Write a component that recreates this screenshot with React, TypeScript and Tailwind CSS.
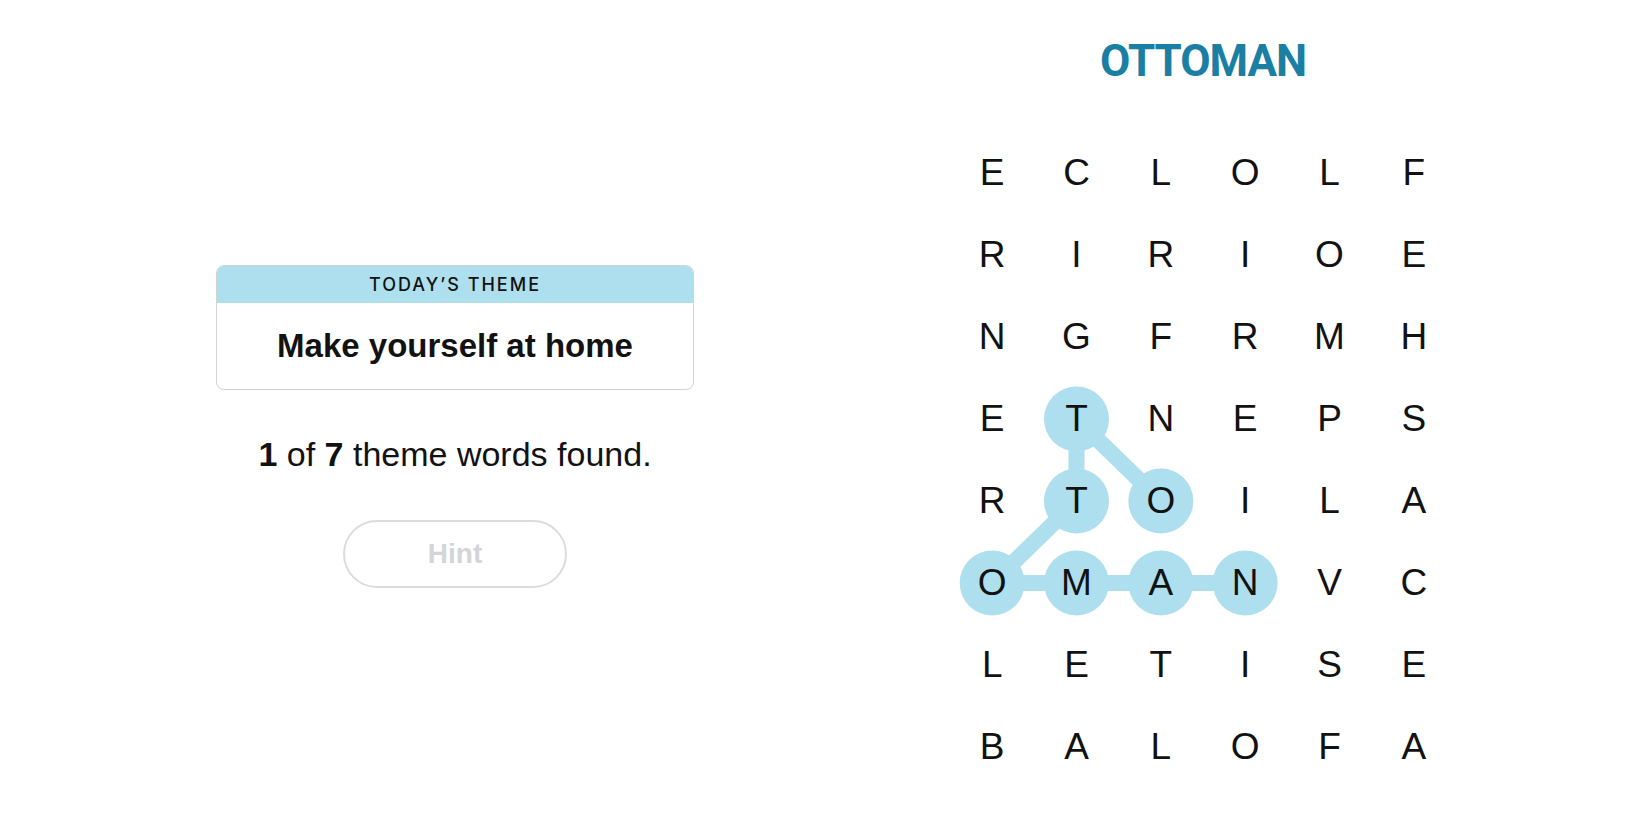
import React from 'react';

const GRID = [
  ['E', 'C', 'L', 'O', 'L', 'F'],
  ['R', 'I', 'R', 'I', 'O', 'E'],
  ['N', 'G', 'F', 'R', 'M', 'H'],
  ['E', 'T', 'N', 'E', 'P', 'S'],
  ['R', 'T', 'O', 'I', 'L', 'A'],
  ['O', 'M', 'A', 'N', 'V', 'C'],
  ['L', 'E', 'T', 'I', 'S', 'E'],
  ['B', 'A', 'L', 'O', 'F', 'A'],
];

// found path, in order: O T T O M A N
const FOUND: [number, number][] = [
  [4, 2],
  [3, 1],
  [4, 1],
  [5, 0],
  [5, 1],
  [5, 2],
  [5, 3],
];

const CELL_W = 506 / 6;
const CELL_H = 82;

const cx = (c: number) => CELL_W / 2 + CELL_W * c;
const cy = (r: number) => CELL_H / 2 + CELL_H * r;

function Board() {
  return (
    <div className="relative w-[506px]">
      <svg className="absolute inset-0" width={506} height={656} viewBox="0 0 506 656">
        {FOUND.slice(1).map(([r, c], i) => {
          const [pr, pc] = FOUND[i];
          return (
            <line
              key={i}
              x1={cx(pc)}
              y1={cy(pr)}
              x2={cx(c)}
              y2={cy(r)}
              stroke="#aedfee"
              strokeWidth={16}
            />
          );
        })}
        {FOUND.map(([r, c], i) => (
          <circle key={i} cx={cx(c)} cy={cy(r)} r={32.5} fill="#aedfee" />
        ))}
      </svg>
      <div className="relative grid grid-cols-6">
        {GRID.flat().map((ch, i) => (
          <div
            key={i}
            className="h-[82px] flex items-center justify-center text-[37px] text-[#121212] font-['Liberation_Sans',Arial,sans-serif]"
          >
            {ch}
          </div>
        ))}
      </div>
    </div>
  );
}

export default function App() {
  return (
    <main className="min-h-screen w-full bg-white flex font-['Liberation_Sans',Arial,sans-serif] text-[#121212]">
      <section className="pl-[216px] pt-[265px] w-[694px] flex flex-col items-center">
        <div className="w-[478px] border border-[#d3d3d3] rounded-lg overflow-hidden">
          <div className="h-[37px] bg-[#aedfee] flex items-center justify-center text-[18px] font-medium tracking-[2px] uppercase font-['Inter',sans-serif]">
            Today’s Theme
          </div>
          <div className="h-[86px] flex items-center justify-center text-[33px] font-bold">
            Make yourself at home
          </div>
        </div>

        <p className="mt-[44px] text-[34px] leading-[40px]">
          <span className="font-bold">1</span> of <span className="font-bold">7</span> theme words found.
        </p>

        <button className="mt-[46px] w-[224px] h-[68px] rounded-full border-2 border-[#dcdcdc] text-[28px] font-bold text-[#d3d5d9]">
          Hint
        </button>
      </section>

      <section className="ml-[256px] pt-[35px] w-[506px] flex flex-col">
        <h2 className="h-[52px] leading-[52px] text-center text-[44px] font-bold tracking-[-1px] text-[#1a7fa3] font-['Roboto',Arial,sans-serif]">
          OTTOMAN
        </h2>
        <div className="mt-[45px]">
          <Board />
        </div>
      </section>
    </main>
  );
}
